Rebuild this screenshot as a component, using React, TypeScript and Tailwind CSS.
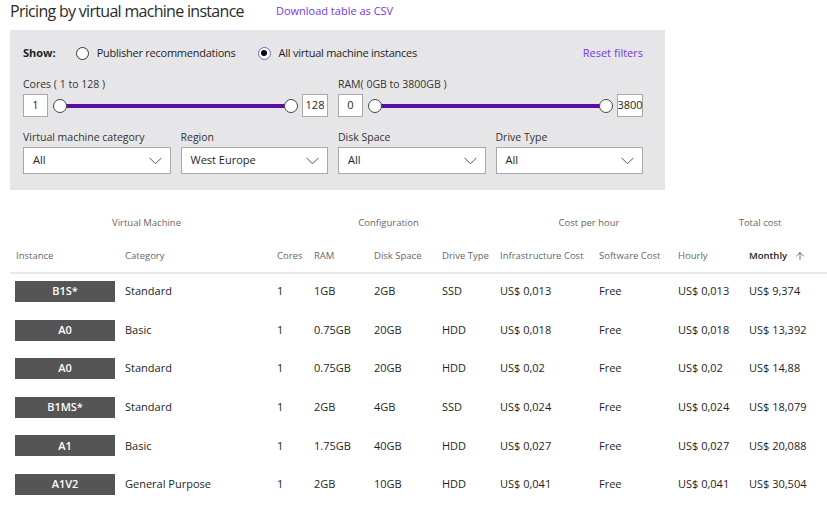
import { ArrowUp } from "lucide-react"

const rows = [
  { name: "B1S*", cat: "Standard", cores: "1", ram: "1GB", disk: "2GB", drive: "SSD", infra: "US$ 0,013", soft: "Free", hourly: "US$ 0,013", monthly: "US$ 9,374" },
  { name: "A0", cat: "Basic", cores: "1", ram: "0.75GB", disk: "20GB", drive: "HDD", infra: "US$ 0,018", soft: "Free", hourly: "US$ 0,018", monthly: "US$ 13,392" },
  { name: "A0", cat: "Standard", cores: "1", ram: "0.75GB", disk: "20GB", drive: "HDD", infra: "US$ 0,02", soft: "Free", hourly: "US$ 0,02", monthly: "US$ 14,88" },
  { name: "B1MS*", cat: "Standard", cores: "1", ram: "2GB", disk: "4GB", drive: "SSD", infra: "US$ 0,024", soft: "Free", hourly: "US$ 0,024", monthly: "US$ 18,079" },
  { name: "A1", cat: "Basic", cores: "1", ram: "1.75GB", disk: "40GB", drive: "HDD", infra: "US$ 0,027", soft: "Free", hourly: "US$ 0,027", monthly: "US$ 20,088" },
  { name: "A1V2", cat: "General Purpose", cores: "1", ram: "2GB", disk: "10GB", drive: "HDD", infra: "US$ 0,041", soft: "Free", hourly: "US$ 0,041", monthly: "US$ 30,504" },
]

// column starts: 10, 125, 277, 314, 374, 442, 500, 599, 678, 749
const cols = "grid grid-cols-[115px_152px_37px_60px_68px_58px_99px_79px_71px_1fr]"

function Radio({ checked, label }: { checked?: boolean; label: string }) {
  return (
    <label className="flex items-center gap-[8px]">
      <span
        className={
          checked
            ? "flex h-[13px] w-[13px] items-center justify-center rounded-full border border-[#6e5fd0] bg-white"
            : "h-[13px] w-[13px] rounded-full border border-[#333] bg-white"
        }
      >
        {checked && <span className="h-[6px] w-[6px] rounded-full bg-black" />}
      </span>
      <span className="tracking-[-0.25px]">{label}</span>
    </label>
  )
}

function Range({ label, min, max }: { label: string; min: string; max: string }) {
  return (
    <div>
      <div className="h-[14px] leading-[14px] text-[10.5px] text-[#333]">{label}</div>
      <div className="mt-[3px] flex h-[23px] items-center">
        <div className="flex h-[23px] w-[25px] items-center justify-center border border-[#a8a8a8] bg-white">{min}</div>
        <div className="relative ml-[5px] mr-[4px] h-[14px] flex-1">
          <div className="absolute left-[7px] right-[7px] top-[5px] h-[4px] bg-[#5b0ea6]" />
          <div className="absolute left-0 top-0 h-[14px] w-[14px] rounded-full border border-[#444] bg-white" />
          <div className="absolute right-0 top-0 h-[14px] w-[14px] rounded-full border border-[#444] bg-white" />
        </div>
        <div className="flex h-[23px] w-[26px] items-center justify-center border border-[#a8a8a8] bg-white">{max}</div>
      </div>
    </div>
  )
}

function Select({ label, value }: { label: string; value: string }) {
  return (
    <div>
      <div className="h-[14px] leading-[14px] text-[10.5px] text-[#333]">{label}</div>
      <div className="mt-[3px] flex h-[27px] items-center justify-between border border-[#a8a8a8] bg-white pl-[9px] pr-[8px]">
        <span>{value}</span>
        <svg width="13" height="8" viewBox="0 0 13 8" fill="none" stroke="#555" strokeWidth="1">
          <polyline points="0.5,0.8 6.5,6.8 12.5,0.8" />
        </svg>
      </div>
    </div>
  )
}

export default function App() {
  return (
    <div className="min-h-[509px] w-[827px] bg-white pl-[10px] font-['Open_Sans',sans-serif] text-[11px] text-[#1e1e1e]">
      <div className="flex h-[22px] items-center">
        <h1 className="text-[16px] tracking-[-0.7px] text-[#2b2b2b]">Pricing by virtual machine instance</h1>
        <a className="ml-[32px] text-[11px] text-[#7338e0]">Download table as CSV</a>
      </div>

      <div className="mt-[8px] h-[160px] w-[655px] bg-[#e6e6e8] pl-[13px] pr-[22px] pt-[14px]">
        <div className="flex h-[18px] items-center">
          <span className="mr-[20px] font-bold">Show:</span>
          <Radio label="Publisher recommendations" />
          <div className="w-[22px]" />
          <Radio checked label="All virtual machine instances" />
          <a className="ml-auto text-[#7338e0]">Reset filters</a>
        </div>

        <div className="mt-[15px] grid grid-cols-2 gap-[10px]">
          <Range label="Cores ( 1 to 128 )" min="1" max="128" />
          <Range label="RAM( 0GB to 3800GB )" min="0" max="3800" />
        </div>

        <div className="mt-[13px] grid grid-cols-4 gap-[10px]">
          <Select label="Virtual machine category" value="All" />
          <Select label="Region" value="West Europe" />
          <Select label="Disk Space" value="All" />
          <Select label="Drive Type" value="All" />
        </div>
      </div>

      <div className="pt-[23px] text-[9.5px] text-[#666]">
        <div className="grid h-[20px] grid-cols-[267px_223px_178px_1fr] items-center text-center">
          <div className="pl-[6px]">Virtual Machine</div>
          <div>Configuration</div>
          <div>Cost per hour</div>
          <div className="pl-[15px]">Total cost</div>
        </div>
        <div className={`${cols} mt-[13px] h-[20px] items-center`}>
          <div className="pl-[6px]">Instance</div>
          <div>Category</div>
          <div>Cores</div>
          <div>RAM</div>
          <div>Disk Space</div>
          <div>Drive Type</div>
          <div>Infrastructure Cost</div>
          <div>Software Cost</div>
          <div>Hourly</div>
          <div className="flex items-center gap-[7px] font-semibold text-[#222]">
            Monthly <ArrowUp size={12} strokeWidth={1.5} className="text-[#444]" />
          </div>
        </div>
        <div className="mt-[6px] h-[2px] bg-[#e8e8e8]" />
      </div>

      <div>
        {rows.map((r, i) => (
          <div key={i} className={`${cols} h-[38.6px] items-start pt-[7px]`}>
            <div className="pl-[5px]">
              <div className="flex h-[21px] w-[100px] items-center justify-center bg-[#555] font-semibold text-white">{r.name}</div>
            </div>
            <div className="flex h-[21px] items-center">{r.cat}</div>
            <div className="flex h-[21px] items-center">{r.cores}</div>
            <div className="flex h-[21px] items-center">{r.ram}</div>
            <div className="flex h-[21px] items-center">{r.disk}</div>
            <div className="flex h-[21px] items-center">{r.drive}</div>
            <div className="flex h-[21px] items-center">{r.infra}</div>
            <div className="flex h-[21px] items-center">{r.soft}</div>
            <div className="flex h-[21px] items-center">{r.hourly}</div>
            <div className="flex h-[21px] items-center">{r.monthly}</div>
          </div>
        ))}
      </div>
    </div>
  )
}
